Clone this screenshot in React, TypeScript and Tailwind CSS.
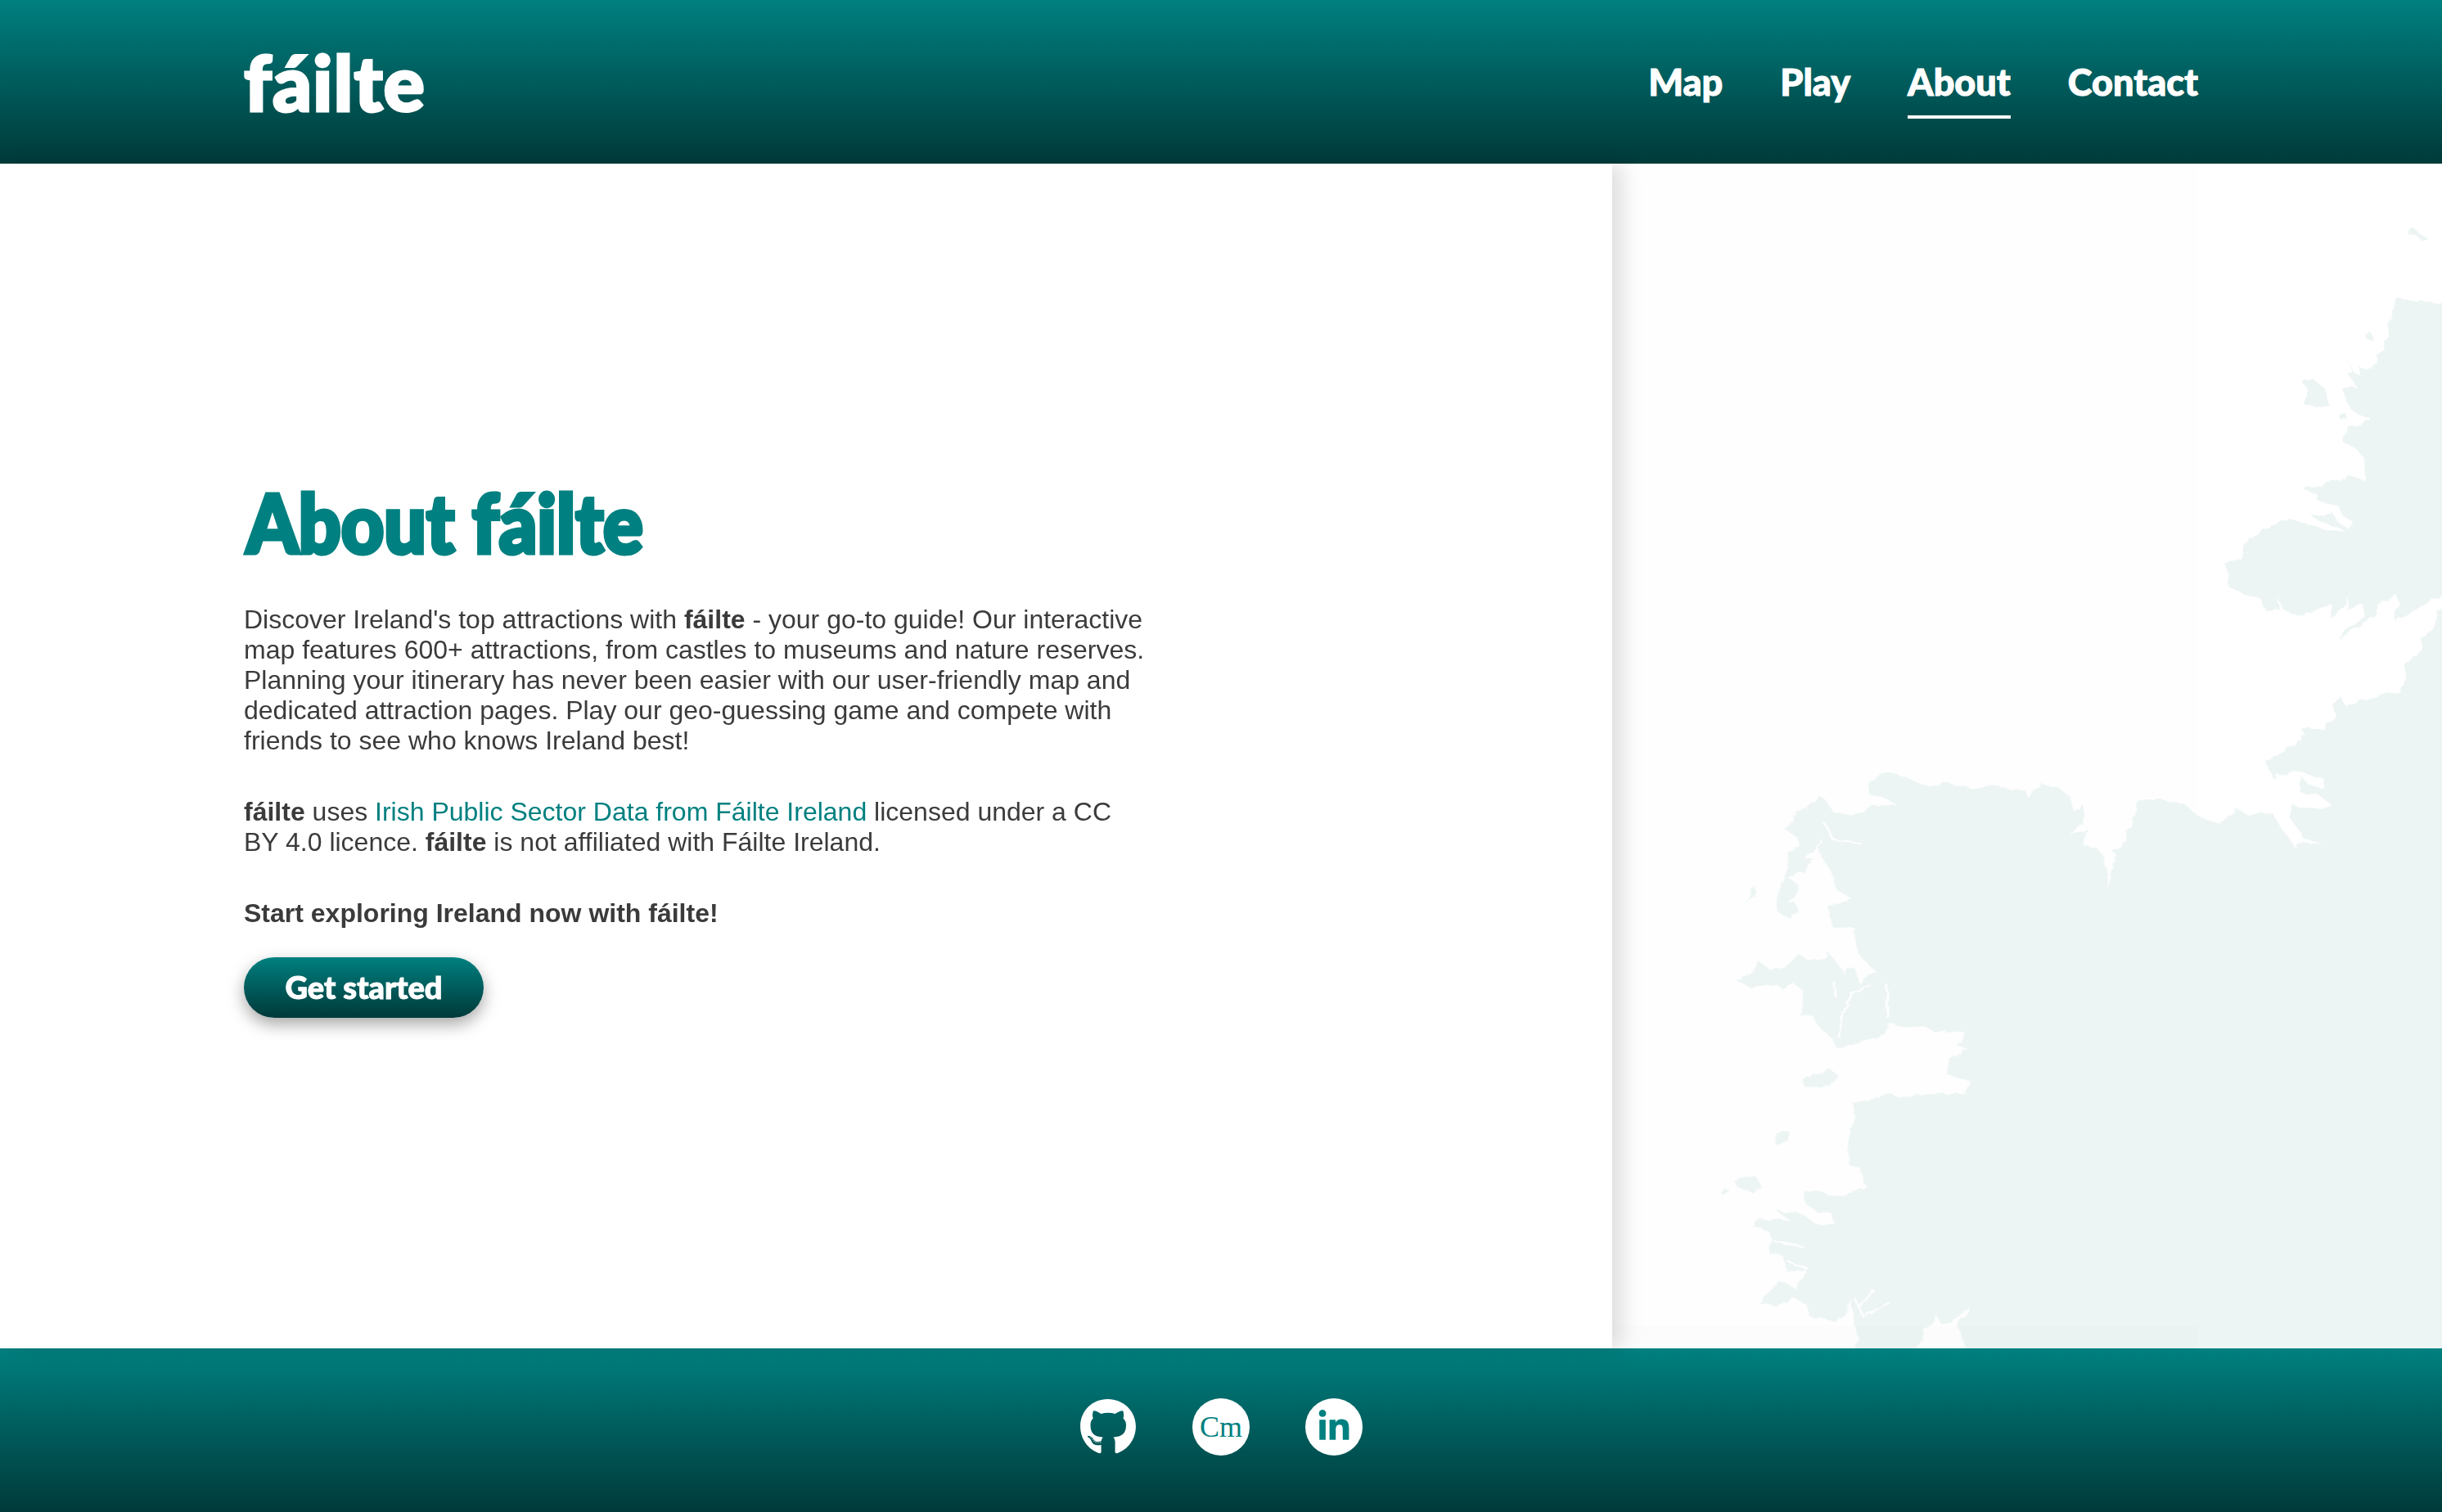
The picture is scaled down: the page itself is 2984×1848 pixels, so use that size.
import { FaGithub, FaLinkedinIn } from 'react-icons/fa'

const navLinks = ['Map', 'Play', 'About', 'Contact']

const northCoast =
  'M1620 335 L1568 335 L1535 330 L1510 328 L1485 320 L1478 345 L1476 365 L1466 385 L1468 410 L1460 425 L1462 445 L1446 458 L1450 478 L1436 490 L1420 492 L1412 480 L1418 510 L1404 500 L1394 468 L1402 500 L1392 502 L1405 525 L1412 540 L1398 530 L1382 540 L1390 565 L1400 590 L1415 602 L1435 610 L1425 622 L1395 632 L1385 650 L1385 668 L1410 685 L1422 705 L1440 708 L1460 712 L1468 698 L1450 690 L1448 672 L1432 682 L1424 712 L1425 760 L1412 755 L1398 750 L1380 762 L1360 755 L1348 775 L1322 772 L1312 782 L1335 790 L1335 805 L1355 815 L1375 820 L1385 845 L1403 858 L1395 875 L1375 860 L1365 835 L1340 842 L1322 838 L1340 858 L1370 870 L1390 882 L1350 875 L1330 868 L1290 852 L1250 868 L1225 890 L1200 908 L1198 945 L1165 958 L1172 985 L1170 1012 L1200 1030 L1232 1042 L1240 1070 L1268 1068 L1260 1035 L1275 1070 L1300 1085 L1330 1072 L1362 1052 L1362 1090 L1385 1065 L1398 1030 L1392 1072 L1420 1052 L1425 1085 L1400 1105 L1385 1120 L1378 1145 L1395 1120 L1420 1105 L1445 1080 L1450 1055 L1485 1035 L1490 1055 L1478 1095 L1510 1075 L1550 1045 L1568 1035 L1620 1050 L1568 1062 L1558 1070 L1558 1100 L1530 1140 L1530 1165 L1500 1200 L1503 1235 L1490 1265 L1465 1270 L1420 1285 L1390 1300 L1380 1275 L1368 1300 L1370 1325 L1345 1355 L1320 1385 L1305 1365 L1310 1385 L1620 1385 Z ' +
  'M1505 155 L1515 153 L1528 170 L1540 178 L1532 186 L1520 172 L1506 170 Z ' +
  'M1310 525 L1328 515 L1352 540 L1358 578 L1335 582 L1310 575 L1318 540 Z ' +
  'M1378 600 L1390 598 L1390 612 L1378 612 Z M1428 410 L1438 406 L1442 425 L1428 422 Z'

const southCoast =
  'M1620 -20 L1308 -20 L1310 10 L1280 30 L1240 60 L1258 110 L1262 95 L1300 85 L1322 95 L1350 105 L1345 125 L1320 118 L1305 95 L1305 138 L1340 145 L1365 170 L1345 178 L1310 175 L1290 170 L1285 200 L1305 235 L1310 250 L1345 265 L1300 262 L1295 275 L1285 250 L1272 230 L1255 190 L1235 185 L1210 195 L1185 175 L1165 205 L1145 212 L1115 195 L1090 165 L1045 155 L1005 155 L1000 190 L980 250 L975 275 L955 282 L965 290 L955 320 L950 380 L948 330 L940 295 L930 275 L905 270 L905 245 L915 225 L895 235 L875 240 L905 215 L905 170 L885 185 L880 150 L860 128 L825 115 L800 150 L795 130 L765 130 L730 120 L700 130 L690 125 L650 112 L620 125 L580 105 L550 88 L530 90 L505 115 L505 140 L540 155 L558 170 L535 165 L500 180 L480 195 L465 190 L440 185 L425 155 L412 145 L405 165 L370 185 L360 220 L350 228 L375 250 L378 270 L355 285 L358 325 L345 360 L335 410 L340 435 L360 448 L375 430 L370 410 L355 405 L372 395 L375 365 L355 345 L385 330 L405 300 L385 300 L410 270 L420 300 L440 340 L445 375 L475 400 L430 420 L440 470 L480 470 L480 500 L490 540 L505 560 L520 580 L505 585 L490 610 L480 570 L460 570 L465 590 L455 570 L430 530 L425 550 L395 550 L375 535 L350 568 L320 570 L300 550 L295 575 L260 600 L290 620 L335 608 L345 620 L365 605 L385 625 L380 690 L400 685 L415 715 L440 745 L445 765 L470 760 L525 740 L545 705 L570 715 L610 712 L625 725 L660 725 L685 728 L670 760 L690 770 L655 790 L650 830 L695 848 L678 878 L630 875 L600 880 L565 888 L545 878 L520 890 L475 900 L480 940 L470 980 L465 1010 L470 1055 L490 1060 L495 1095 L505 1110 L480 1115 L460 1132 L430 1125 L415 1115 L385 1120 L390 1150 L410 1168 L435 1170 L440 1195 L410 1200 L390 1180 L370 1170 L335 1165 L360 1190 L320 1185 L295 1190 L292 1205 L320 1215 L325 1240 L320 1270 L345 1275 L350 1290 L355 1315 L390 1310 L380 1330 L370 1355 L335 1335 L320 1370 L300 1390 L335 1400 L365 1378 L390 1395 L395 1425 L440 1435 L465 1420 L470 1380 L480 1445 L485 1475 L478 1520 L590 1520 L610 1460 L630 1420 L640 1445 L660 1440 L680 1410 L695 1405 L670 1445 L690 1520 L1620 1520 Z ' +
  'M290 365 L300 385 L285 400 L270 425 L285 395 Z ' +
  'M385 840 L415 830 L430 812 L450 835 L435 860 L385 862 Z ' +
  'M335 975 L360 970 L355 995 L330 1002 Z ' +
  'M235 1105 L250 1120 L230 1125 Z M255 1090 L295 1080 L310 1110 L290 1120 L265 1110 Z'

// thin inlets that cut across the land
const inlets =
  'M425 215 L440 255 L490 262 M420 255 L410 270 M510 610 L475 630 L455 690 L450 740 M540 610 L540 690 M440 600 L445 640 M330 1240 L385 1255 M355 1290 L395 1310 M480 1380 L495 1425 L545 1390 M515 1360 L490 1400'

function CoastMap() {
  return (
    <svg viewBox="1970 200 1014 1448" className="block h-full w-full" aria-hidden="true">
      <defs>
        <filter id="rough" x="-5%" y="-5%" width="110%" height="110%">
          <feTurbulence type="fractalNoise" baseFrequency="0.09" numOctaves="2" seed="4" />
          <feDisplacementMap in="SourceGraphic" scale="7" />
        </filter>
      </defs>
      <rect x="1970" y="200" width="716" height="1448" fill="#fefefe" />
      <g fill="#edf5f4" filter="url(#rough)">
        <path transform="matrix(0.6595 0 0 0.5102 1950 200)" d={northCoast} />
        <g transform="matrix(0.6595 0 0 0.4975 1950 900)">
          <path d={southCoast} />
          <path d={inlets} fill="none" stroke="#ffffff" strokeWidth="4" />
        </g>
      </g>
      <rect x="1970" y="1620" width="716" height="28" fill="#000000" fillOpacity="0.008" />
    </svg>
  )
}

export default function App() {
  return (
    <div className="flex h-[1848px] flex-col overflow-hidden bg-white font-['Liberation_Sans',Arial,sans-serif] text-[#3b3b3b]">
      <header className="flex h-[200px] shrink-0 items-center justify-between bg-gradient-to-b from-[#008080] to-[#003a3a] px-[298px] text-white">
        <a className="font-['Lato',sans-serif] text-[94px] leading-none font-black tracking-[1px] [-webkit-text-stroke:3px_white]">
          fáilte
        </a>
        <nav className="flex items-center gap-[70px]">
          {navLinks.map((link) => (
            <a
              key={link}
              className={`flex h-[90px] items-center border-b-4 pt-[4px] font-['Lato',sans-serif] text-[45px] leading-none font-black [-webkit-text-stroke:1px_white] ${
                link === 'About' ? 'border-white' : 'border-transparent'
              }`}
            >
              {link}
            </a>
          ))}
        </nav>
      </header>

      <main className="flex min-h-0 flex-1">
        <section className="relative z-10 flex w-[1970px] shrink-0 flex-col justify-center bg-white pl-[298px] shadow-[12px_0_24px_rgba(0,0,0,0.13)]">
          <h1 className="mb-[74px] ml-[3px] origin-left scale-x-[0.91] font-['Lato',sans-serif] text-[100px] leading-[56px] font-black whitespace-nowrap text-[#008080] [-webkit-text-stroke:5px_#008080]">
            About fáilte
          </h1>
          <div className="w-[1110px] text-[32px] leading-[37px]">
            <p className="mb-[50px]">
              Discover Ireland's top attractions with <strong>fáilte</strong> - your go-to guide! Our interactive
              map features 600+ attractions, from castles to museums and nature reserves. Planning your
              itinerary has never been easier with our user-friendly map and dedicated attraction pages. Play
              our geo-guessing game and compete with friends to see who knows Ireland best!
            </p>
            <p className="mb-[50px]">
              <strong>fáilte</strong> uses{' '}
              <a className="text-[#008080]">Irish Public Sector Data from Fáilte Ireland</a> licensed under a CC
              BY 4.0 licence. <strong>fáilte</strong> is not affiliated with Fáilte Ireland.
            </p>
            <p className="mb-[35px] font-bold">Start exploring Ireland now with fáilte!</p>
          </div>
          <button className="mb-[-4px] h-[74px] w-[293px] rounded-full bg-gradient-to-b from-[#008080] to-[#003a3a] font-['Lato',sans-serif] text-[38px] font-black text-white shadow-[0_8px_20px_rgba(0,0,0,0.35)] [-webkit-text-stroke:1px_white]">
            Get started
          </button>
        </section>
        <section className="min-w-0 flex-1">
          <CoastMap />
        </section>
      </main>

      <footer className="flex h-[200px] shrink-0 items-center justify-center gap-[68px] bg-gradient-to-b from-[#008080] to-[#003a3a] pb-[8px]">
        <a className="text-white">
          <FaGithub className="h-[70px] w-[70px]" />
        </a>
        <a className="flex h-[70px] w-[70px] items-center justify-center rounded-full bg-white font-['Liberation_Serif',serif] text-[36px] text-[#008080]">
          Cm
        </a>
        <a className="flex h-[70px] w-[70px] items-center justify-center rounded-full bg-white text-[#008080]">
          <FaLinkedinIn className="h-[42px] w-[42px]" />
        </a>
      </footer>
    </div>
  )
}
